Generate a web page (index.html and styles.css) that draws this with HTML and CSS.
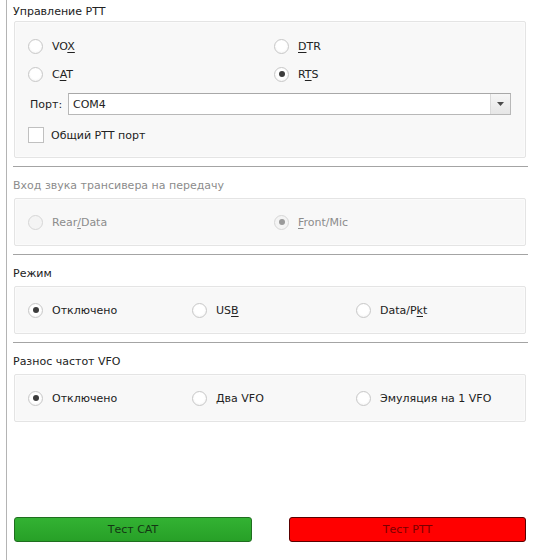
FILE: index.html
```html
<!DOCTYPE html>
<html lang="ru">
<head>
<meta charset="utf-8">
<title>Настройки радио</title>
<link rel="stylesheet" href="styles.css">
</head>
<body>
<div class="page">
  <section class="group first">
    <div class="title">Управление PTT</div>
    <div class="frame ptt">
      <div class="grid2">
        <label class="radio"><span class="dot"></span><span>VO<u>X</u></span></label>
        <label class="radio"><span class="dot"></span><span><u>D</u>TR</span></label>
        <label class="radio"><span class="dot"></span><span>C<u>A</u>T</span></label>
        <label class="radio"><span class="dot on"></span><span>R<u>T</u>S</span></label>
      </div>
      <div class="port">
        <span class="port-label">Порт:</span>
        <div class="combo">
          <span class="combo-text">COM4</span>
          <span class="combo-btn"><svg width="7" height="4" viewBox="0 0 7 4"><path d="M0 0H7L3.5 4Z" fill="#4a4a4a"/></svg></span>
        </div>
      </div>
      <label class="check"><span class="box"></span><span>Общий PTT порт</span></label>
    </div>
  </section>
  <div class="sep"></div>
  <section class="group">
    <div class="title disabled">Вход звука трансивера на передачу</div>
    <div class="frame row disabled">
      <div class="grid2">
        <label class="radio"><span class="dot dis"></span><span>Rear<u>/</u>Data</span></label>
        <label class="radio"><span class="dot dis on"></span><span><u>F</u>ront/Mic</span></label>
      </div>
    </div>
  </section>
  <div class="sep"></div>
  <section class="group">
    <div class="title">Режим</div>
    <div class="frame row">
      <div class="grid3">
        <label class="radio"><span class="dot on"></span><span>Отключено</span></label>
        <label class="radio"><span class="dot"></span><span>US<u>B</u></span></label>
        <label class="radio"><span class="dot"></span><span>Data/P<u>k</u>t</span></label>
      </div>
    </div>
  </section>
  <div class="sep"></div>
  <section class="group">
    <div class="title">Разнос частот VFO</div>
    <div class="frame row">
      <div class="grid3">
        <label class="radio"><span class="dot on"></span><span>Отключено</span></label>
        <label class="radio"><span class="dot"></span><span>Два VFO</span></label>
        <label class="radio"><span class="dot"></span><span>Эмуляция на 1 VFO</span></label>
      </div>
    </div>
  </section>
  <div class="spacer"></div>
  <div class="buttons">
    <button class="btn green">Тест CAT</button>
    <button class="btn red">Тест PTT</button>
  </div>
</div>
</body>
</html>
```

FILE: styles.css
```css
html, body {
  margin: 0;
  padding: 0;
  background: #ffffff;
}
body {
  width: 533px;
  height: 560px;
  overflow: hidden;
  font-family: "DejaVu Sans", Verdana, sans-serif;
  font-size: 11px;
  color: #222222;
}
.page {
  margin-left: 6px;
  border-left: 1px solid #b4b4b4;
  height: 560px;
  box-sizing: border-box;
  padding: 0 6px 0 6px;
  display: flex;
  flex-direction: column;
}
.group {
  display: flex;
  flex-direction: column;
}
.title {
  height: 13px;
  line-height: 13px;
  margin-top: 12px;
  margin-bottom: 6px;
}
.group.first .title {
  margin-top: 5px;
  margin-bottom: 3px;
}
.title.disabled {
  color: #8c8c8c;
}
.frame {
  margin-left: 1px;
  margin-right: 1px;
  background: #f8f8f8;
  border: 1px solid #e4e4e4;
  box-shadow: inset 0 0 0 1px #fbfbfb;
  border-radius: 2px;
  padding: 0 14px;
}
.frame.ptt {
  height: 137px;
  box-sizing: border-box;
  padding-top: 17px;
}
.frame.row {
  height: 48px;
  box-sizing: border-box;
  display: flex;
  align-items: center;
}
.frame.row .grid2, .frame.row .grid3 {
  width: 100%;
}
.grid2 {
  display: grid;
  grid-template-columns: 246px 1fr;
  row-gap: 14px;
}
.grid3 {
  display: grid;
  grid-template-columns: 164px 164px 1fr;
}
.radio {
  display: flex;
  align-items: center;
  gap: 10px;
  height: 14px;
}
.dot {
  width: 15px;
  height: 15px;
  box-sizing: border-box;
  border-radius: 50%;
  border: 1px solid #c8c8c8;
  background: radial-gradient(circle at 50% 45%, #ffffff 50%, #ececec 100%);
  position: relative;
  flex: none;
  margin-left: -1px;
  margin-right: -1px;
}
.dot.on::after {
  content: "";
  position: absolute;
  left: 3.5px;
  top: 3.5px;
  width: 6px;
  height: 6px;
  border-radius: 50%;
  background: #3c3c3c;
}
.dot.dis {
  border-color: #d6d6d6;
  background: #f4f4f4;
}
.dot.dis.on::after {
  background: #9a9a9a;
}
.frame.disabled {
  color: #8c8c8c;
}
u {
  text-decoration-thickness: 1px;
  text-underline-offset: 2px;
}
.port {
  display: flex;
  align-items: center;
  margin-top: 12px;
  height: 22px;
}
.port-label {
  width: 38px;
  padding-left: 1px;
}
.combo {
  flex: 1;
  height: 22px;
  box-sizing: border-box;
  border: 1px solid #b8b8b8;
  border-top-color: #a8a8a8;
  background: #ffffff;
  display: flex;
  align-items: center;
}
.combo-text {
  flex: 1;
  padding-left: 4px;
}
.combo-btn {
  width: 19px;
  height: 20px;
  border-left: 1px solid #dadada;
  background: linear-gradient(#f6f6f6, #e6e6e6);
  display: flex;
  align-items: center;
  justify-content: center;
}
.check {
  display: flex;
  align-items: center;
  gap: 7px;
  margin-top: 12px;
  margin-left: -1px;
  height: 16px;
}
.box {
  width: 16px;
  height: 16px;
  box-sizing: border-box;
  border: 1px solid #c0c0c0;
  background: #ffffff;
}
.sep {
  height: 1px;
  background: #a4a4a4;
  margin-top: 8px;
  margin-right: -1px;
}
.spacer {
  flex: 1;
}
.buttons {
  display: flex;
  justify-content: space-between;
  margin-bottom: 18px;
  padding-left: 1px;
  padding-right: 1px;
}
.btn {
  width: 238px;
  height: 25px;
  box-sizing: border-box;
  border-radius: 3px;
  font-family: "DejaVu Sans", Verdana, sans-serif;
  font-size: 11px;
  padding: 0;
}
.btn.green {
  background: linear-gradient(#33b233, #27a027);
  border: 1px solid #1f6e1f;
  color: #143514;
}
.btn.red {
  width: 237px;
  background: #ff0000;
  border: 1px solid #5a0000;
  color: #7a0000;
}
```
